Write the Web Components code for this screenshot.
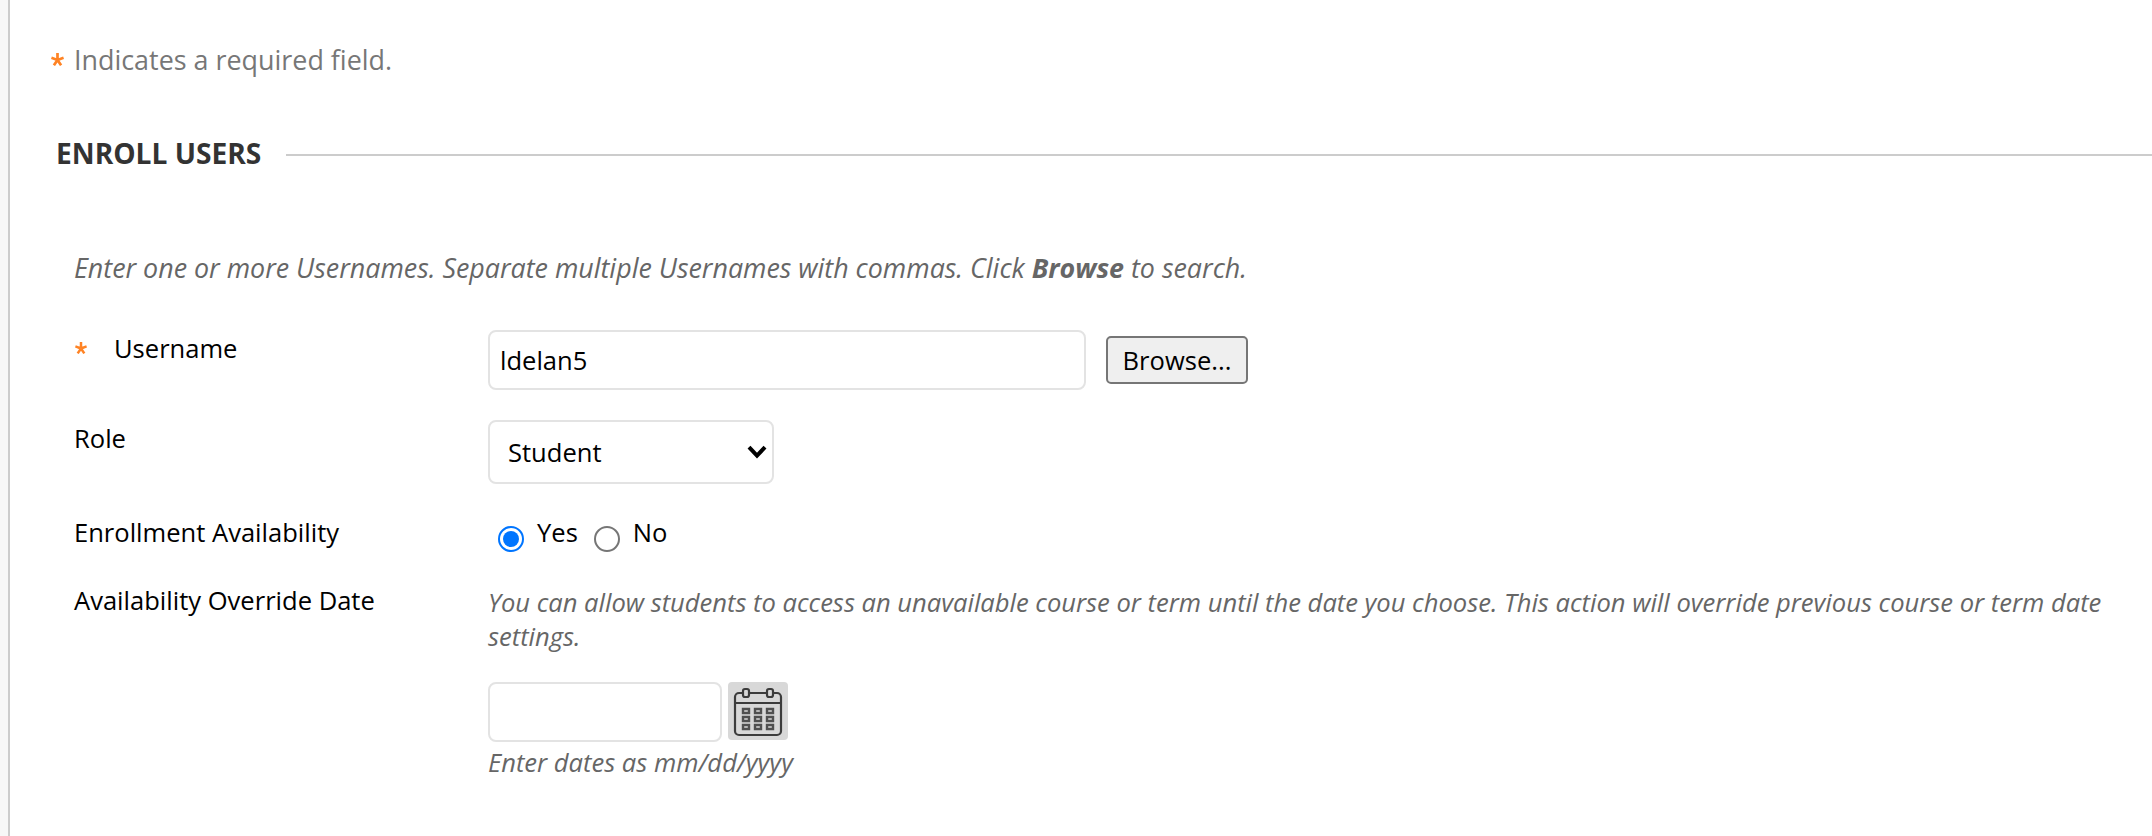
<!DOCTYPE html>
<html lang="en">
<head>
<meta charset="utf-8">
<title>Enroll Users</title>
<style>
html,body{margin:0;height:100%}
body{background:#f7f7f7;font-family:"Open Sans",sans-serif;font-size:25.55px;color:#000;overflow:hidden}
</style>
</head>
<body>
<enroll-page></enroll-page>
<script>
const define = (name, css, html) => customElements.define(name, class extends HTMLElement {
  constructor() {
    super();
    this.attachShadow({mode: 'open'}).innerHTML = `<style>*{box-sizing:border-box}${css}</style>${html}`;
  }
});

define('required-mark', `:host{display:inline-block;color:#ff8324;line-height:1}
svg{display:block;width:var(--mark,13px);height:var(--mark,13px)}`,
`<svg viewBox="0 0 13 13"><path d="M6.5 7V0M6.5 7L.4 4.8M6.5 7L12.6 4.8M6.5 7L2.9 12.3M6.5 7L10.1 12.3" stroke="currentColor" stroke-width="2.7" fill="none"/></svg>`);

define('required-note', `:host{display:flex;align-items:flex-start;height:39px;color:#777;font-size:26.9px;line-height:37px;white-space:nowrap}
required-mark{margin:12px 10px 0 0}`,
`<required-mark></required-mark><span><slot></slot></span>`);

define('section-title', `:host{display:flex;align-items:center;height:40px}
h2{align-self:flex-start;margin:0;font-size:28.15px;line-height:38px;font-weight:700;color:#333;white-space:nowrap;width:230px}
i{flex:1;height:2px;background:#ccc;margin-top:2px}`,
`<h2><slot></slot></h2><i></i>`);

define('help-text', `:host{display:block;font-style:italic;color:#666;line-height:34px}`, `<slot></slot>`);

define('form-row', `:host{display:grid;grid-template-columns:414px 1fr;align-items:start}
.label{display:flex;align-items:flex-start;line-height:36px;white-space:nowrap}
required-mark{--mark:12px;display:none;margin:12px 27px 0 1px}
:host([required]) required-mark{display:block}`,
`<div class="label"><required-mark></required-mark><slot name="label"></slot></div><div><slot></slot></div>`);

define('text-field', `:host{display:block;height:60px}
input{display:block;width:100%;height:100%;border:2px solid #e3e3e3;border-radius:8px;background:#fff;padding:0 10px;font:inherit;color:#000;outline:0}`, `<input type="text">`);

define('push-button', `:host{display:block}
button{display:block;width:142px;height:48px;padding:0;border:2px solid #767676;border-radius:5px;background:#efefef;color:#000;font:inherit;line-height:44px}`,
`<button><slot></slot></button>`);

define('select-box', `:host{display:flex;align-items:center;justify-content:space-between;width:286px;height:64px;border:2px solid #e3e3e3;border-radius:8px;background:#fff;padding:0 5px 0 18px;box-sizing:border-box}
span{line-height:34px}
svg{width:20px;height:14px}`,
`<span><slot></slot></span><svg viewBox="0 0 20 14"><path d="M2 2.2L10 10.6L18 2.2" fill="none" stroke="#000" stroke-width="4"/></svg>`);

define('radio-option', `:host{display:flex;align-items:flex-start;line-height:36px}
svg{width:26px;height:26px;margin:12px 13px 0 0}
circle{fill:#fff;stroke:#767676;stroke-width:2}
.dot{display:none}
:host([checked]) circle{stroke:#0075ff}
:host([checked]) .dot{display:block;fill:#0075ff;stroke:none}`,
`<svg viewBox="0 0 26 26"><circle cx="13" cy="13" r="12"/><circle class="dot" cx="13" cy="13" r="8"/></svg><span><slot></slot></span>`);

define('calendar-button', `:host{display:block;width:60px;height:58px;border-radius:4px;background:#d8d8d8}
svg{display:block}`,
`<svg width="60" height="58" viewBox="0 0 60 58" fill="none" stroke="#3c3c3c" stroke-width="2.2">
<rect x="7" y="11" width="46" height="42" rx="4"/><path d="M7 21H53"/>
<g fill="#d8d8d8"><rect x="15" y="7" width="6" height="8" rx="2"/><rect x="39" y="7" width="6" height="8" rx="2"/></g>
<path stroke="#505050" stroke-width="2.4" d="M15 27h6v4h-6zM27 27h6v4h-6zM39 27h6v4h-6zM15 35h6v4h-6zM27 35h6v4h-6zM39 35h6v4h-6zM15 43h6v4h-6zM27 43h6v4h-6zM39 43h6v4h-6z"/></svg>`);

define('enroll-page', `:host{display:block;margin-left:8px;border-left:2px solid #ccc;background:#fff;height:836px;padding-top:41px;box-sizing:border-box}
required-note{margin-left:41px}
section-title{margin:54px 0 0 46px}
.body{margin:76px 0 0 64px}
.name{height:90px}.role{height:94px}.avail{height:68px}
.pair{display:flex;align-items:center}
.wide{width:598px;margin-right:20px}
.short{width:234px;margin-right:6px}
.intro{height:80px;font-size:26.83px;line-height:35px}
.radios{display:flex;padding-left:10px;gap:16px}
.cal{align-items:flex-start;margin:29px 0 3px}
.d{max-width:1640px;padding-top:3px}`,
`<required-note>Indicates a required field.</required-note>
<section-title>ENROLL USERS</section-title>
<div class="body">
<help-text class="intro">Enter one or more Usernames. Separate multiple Usernames with commas. Click <b>Browse</b> to search.</help-text>
<form-row class="name" required><span slot="label">Username</span><div class="pair"><text-field class="wide" value="ldelan5"></text-field><push-button>Browse...</push-button></div></form-row>
<form-row class="role"><span slot="label">Role</span><select-box>Student</select-box></form-row>
<form-row class="avail"><span slot="label">Enrollment Availability</span><div class="radios"><radio-option checked>Yes</radio-option><radio-option>No</radio-option></div></form-row>
<form-row class="date"><span slot="label">Availability Override Date</span><div class="d"><help-text>You can allow students to access an unavailable course or term until the date you choose. This action will override previous course or term date settings.</help-text><div class="pair cal"><text-field class="short"></text-field><calendar-button></calendar-button></div><help-text>Enter dates as mm/dd/yyyy</help-text></div></form-row>
</div>`);

const page = document.querySelector('enroll-page');
page.shadowRoot.querySelectorAll('text-field').forEach(f => {
  f.shadowRoot.querySelector('input').value = f.getAttribute('value') || '';
});
</script>
</body>
</html>
